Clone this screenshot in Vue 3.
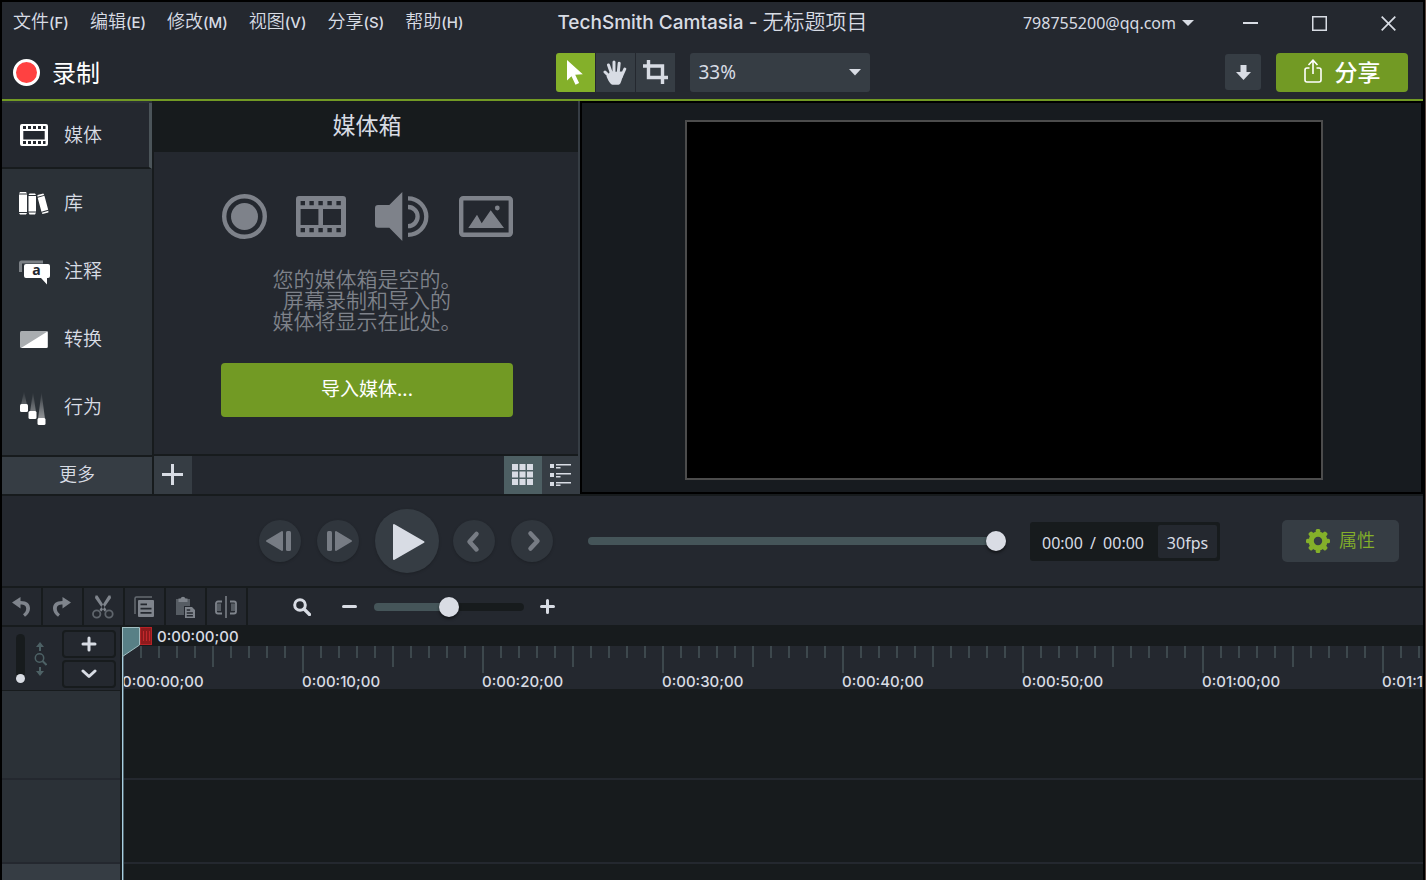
<script setup>
import { ref } from 'vue'

const menus = [
  ['文件', '(F)'],
  ['编辑', '(E)'],
  ['修改', '(M)'],
  ['视图', '(V)'],
  ['分享', '(S)'],
  ['帮助', '(H)'],
]
const tabs = [
  { id: 'media', label: '媒体' },
  { id: 'library', label: '库' },
  { id: 'annotations', label: '注释' },
  { id: 'transitions', label: '转换' },
  { id: 'behaviors', label: '行为' },
]
const active = ref('media')
const position = ref(100)
const timelineZoom = ref(50)
const trackHeight = ref(0)
const marks = [
  '0:00:00;00',
  '0:00:10;00',
  '0:00:20;00',
  '0:00:30;00',
  '0:00:40;00',
  '0:00:50;00',
  '0:01:00;00',
  '0:01:10;00',
]
</script>

<template>
  <div class="app">
    <header class="titlebar">
      <nav class="menus">
        <button v-for="m in menus" :key="m[0]" type="button" class="menu">
          {{ m[0] }}<span class="key">{{ m[1] }}</span>
        </button>
      </nav>
      <h1 class="title">TechSmith Camtasia - <span class="project">无标题项目</span></h1>
      <div class="window">
        <button type="button" class="account">
          798755200@qq.com
          <svg width="12" height="6" viewBox="0 0 12 6"><path d="M0 0h12L6 6z" fill="currentColor" /></svg>
        </button>
        <button type="button" class="win" aria-label="最小化">
          <svg width="15" height="15" viewBox="0 0 15 15"><path d="M0 7h15" stroke="currentColor" stroke-width="2" /></svg>
        </button>
        <button type="button" class="win" aria-label="最大化">
          <svg width="15" height="15" viewBox="0 0 15 15"><rect x="0.75" y="0.75" width="13.5" height="13.5" fill="none" stroke="currentColor" stroke-width="1.5" /></svg>
        </button>
        <button type="button" class="win" aria-label="关闭">
          <svg width="15" height="15" viewBox="0 0 15 15"><path d="M.7.7l13.6 13.6M14.3.7L.7 14.3" stroke="currentColor" stroke-width="1.7" /></svg>
        </button>
      </div>
    </header>

    <div class="toolbar">
      <button type="button" class="record">
        <svg width="27" height="27" viewBox="0 0 27 27"><circle cx="13.5" cy="13.5" r="12" fill="#ff4141" stroke="#fff" stroke-width="3" /></svg>
        录制
      </button>
      <div class="tools">
        <button type="button" class="tool on" aria-label="选择">
          <svg width="18" height="25" viewBox="0 0 18 25"><path d="M1 0v20.500l4.500-4.300 4 8.600 3.600-1.700-3.900-8.300 7.600-.5z" fill="#fff" /></svg>
        </button>
        <button type="button" class="tool" aria-label="平移">
          <svg width="24" height="25" viewBox="0 0 24 25">
            <g stroke="currentColor" stroke-width="3" stroke-linecap="round" fill="none">
              <path d="M2 12l6 6M5.500 5l3.200 9M11 2v11M16.200 3.200L15.200 13M21.800 9l-3.600 8" />
            </g>
            <path d="M7 12l12-.5 1 3.500c-1.500 6-2.500 9.700-4.500 9.700h-6C7.500 24.700 5 20 3.500 16.500z" fill="currentColor" />
          </svg>
        </button>
        <button type="button" class="tool" aria-label="裁剪">
          <svg width="25" height="24" viewBox="0 0 25 24"><path d="M0 6h19.500v18M5.500 0v17.500H25" fill="none" stroke="currentColor" stroke-width="3.400" /></svg>
        </button>
        <div class="scale">
          <select aria-label="画布缩放">
            <option>33%</option>
          </select>
          <svg width="12" height="7" viewBox="0 0 12 7"><path d="M0 0h12L6 6.500z" fill="currentColor" /></svg>
        </div>
      </div>
      <div class="actions">
        <button type="button" class="download" aria-label="下载">
          <svg width="15" height="15" viewBox="0 0 15 15"><path d="M4.500 0h6v7H15l-7.500 8L0 7h4.500z" fill="currentColor" /></svg>
        </button>
        <button type="button" class="share">
          <svg width="18" height="24" viewBox="0 0 18 24"><path d="M5.500 9H3a2 2 0 0 0-2 2v10a2 2 0 0 0 2 2h12a2 2 0 0 0 2-2V11a2 2 0 0 0-2-2h-2.500M9 15V1.500M4.500 6L9 1.200 13.500 6" fill="none" stroke="#fff" stroke-width="1.600" /></svg>
          分享
        </button>
      </div>
    </div>

    <main class="workspace">
      <aside class="sidebar">
        <button
          v-for="t in tabs"
          :key="t.id"
          type="button"
          class="tab"
          :class="{ active: active === t.id }"
          @click="active = t.id"
        >
          <svg v-if="t.id === 'media'" width="32" height="36" viewBox="0 0 32 36">
            <path fill="#fff" fill-rule="evenodd" d="M4 7h24a2 2 0 0 1 2 2v18a2 2 0 0 1-2 2H4a2 2 0 0 1-2-2V9a2 2 0 0 1 2-2zM5.300 14v8.500h21.400V14zM5 9v3h3V9zm5 0v3h3V9zm5 0v3h3V9zm5 0v3h3V9zm5 0v3h2.500V9zM5 24v3h3v-3zm5 0v3h3v-3zm5 0v3h3v-3zm5 0v3h3v-3zm5 0v3h2.500v-3z" />
          </svg>
          <svg v-else-if="t.id === 'library'" width="32" height="36" viewBox="0 0 32 36">
            <g fill="#fff">
              <path d="M1 9.500h8V27H1zM2 7h6l1 1.500H1zM1 28h8l-1 1.500H2zM10.500 11h7.500v15.500h-7.500zM11.500 8.500h5.500l1 1.500h-7.500zM10.500 27.500h7.500l-1 2h-5.500z" />
              <path transform="rotate(-15 25 19)" d="M21.500 11.500h7V26h-7zM22 9h6l.5 1.500h-7zM21.500 27h7l-.5 1.500h-6z" />
            </g>
          </svg>
          <svg v-else-if="t.id === 'annotations'" width="32" height="36" viewBox="0 0 32 36">
            <path d="M2.500 19v-9a1 1 0 0 1 1-1H25" stroke="#7b8085" stroke-width="3" fill="none" />
            <path d="M8 11h22a2 2 0 0 1 2 2V23a2 2 0 0 1-2 2h-1v6.500L23 25H8a2 2 0 0 1-2-2V13a2 2 0 0 1 2-2z" fill="#fff" />
            <text x="18.500" y="22" text-anchor="middle" class="glyph">a</text>
          </svg>
          <svg v-else-if="t.id === 'transitions'" width="32" height="36" viewBox="0 0 32 36">
            <rect x="2" y="10" width="28" height="17" rx="1.500" fill="#a9adb0" />
            <path d="M29.500 10.500V25.500a1.500 1.500 0 0 1-1.500 1.500H3z" fill="#fff" />
          </svg>
          <svg v-else width="32" height="36" viewBox="0 0 32 36">
            <defs>
              <linearGradient id="trail" x1="0" y1="0" x2="0" y2="1">
                <stop offset="0" stop-color="#fff" stop-opacity="0" />
                <stop offset="1" stop-color="#fff" stop-opacity="0.500" />
              </linearGradient>
            </defs>
            <path d="M6 2l3 14H3zM15 3l3 20h-6zM23.500 3l3.500 27h-7z" fill="url(#trail)" />
            <g fill="#fff"><rect x="2" y="15" width="8" height="8" rx="1.500" /><rect x="10.500" y="22" width="8" height="8" rx="1.500" /><rect x="19.500" y="29" width="8" height="7" rx="1.500" /></g>
          </svg>
          <span>{{ t.label }}</span>
        </button>
        <button type="button" class="more">更多</button>
      </aside>

      <section class="bin">
        <h2 class="bin-title">媒体箱</h2>
        <div class="bin-body">
          <div class="kinds">
            <svg width="45" height="45" viewBox="0 0 45 45"><circle cx="22.500" cy="22.500" r="20.300" fill="none" stroke="currentColor" stroke-width="4.400" /><circle cx="22.500" cy="22.500" r="13.500" fill="currentColor" /></svg>
            <svg width="50" height="41" viewBox="0 0 50 41">
              <path fill="currentColor" fill-rule="evenodd" d="M3 0h44a3 3 0 0 1 3 3v35a3 3 0 0 1-3 3H3a3 3 0 0 1-3-3V3a3 3 0 0 1 3-3zM4.600 13v16h17.800V13zM27 13v16h18V13zM4.600 5v4.300H9V5zm8.800 0v4.300h4.400V5zm9 0v4.300h4.400V5zm9 0v4.300h4.400V5zm9 0v4.300h4.400V5zM4.600 32v4.300H9V32zm8.800 0v4.300h4.400V32zm9 0v4.300h4.400V32zm9 0v4.300h4.400V32zm9 0v4.300h4.400V32z" />
            </svg>
            <svg width="55" height="49" viewBox="0 0 55 49">
              <path d="M3 13h11.300L27.300 0v49L14.300 35.700H3a3 3 0 0 1-3-3V16a3 3 0 0 1 3-3z" fill="currentColor" />
              <path d="M33 6.300a18.300 18.300 0 0 1 0 36.600M33 15a9.600 9.600 0 0 1 0 19.200" fill="none" stroke="currentColor" stroke-width="4.300" />
            </svg>
            <svg width="54" height="41" viewBox="0 0 54 41">
              <rect x="2.200" y="2.200" width="49.600" height="36.600" rx="2" fill="none" stroke="currentColor" stroke-width="4.400" />
              <path d="M9.300 32L18 18.700l4.700 8.600 9-13L45 32z" fill="currentColor" /><circle cx="38.300" cy="12" r="2.400" fill="currentColor" />
            </svg>
          </div>
          <p class="empty">您的媒体箱是空的。<br />屏幕录制和导入的<br />媒体将显示在此处。</p>
          <button type="button" class="import">导入媒体...</button>
        </div>
        <div class="bin-bar">
          <button type="button" class="sq" aria-label="添加">
            <svg width="21" height="21" viewBox="0 0 21 21"><path d="M10.500 0v21M0 10.500h21" stroke="currentColor" stroke-width="3" /></svg>
          </button>
          <span class="grow"></span>
          <button type="button" class="sq on" aria-label="缩略图">
            <svg width="21" height="21" viewBox="0 0 21 21"><path d="M0 0h6v6H0zM7.500 0h6v6h-6zM15 0h6v6h-6zM0 7.500h6v6H0zM7.500 7.500h6v6h-6zM15 7.500h6v6h-6zM0 15h6v6H0zM7.500 15h6v6h-6zM15 15h6v6h-6z" fill="currentColor" /></svg>
          </button>
          <button type="button" class="sq" aria-label="列表">
            <svg width="21" height="22" viewBox="0 0 21 22"><path d="M0 0h4v4H0zM0 9h4v4H0zM0 18h4v4H0zM6 0h15v1.500H6zM6 9h15v1.500H6zM6 18h15v1.500H6zM6 3h4.500v1.500H6zM6 12h4.500v1.500H6zM6 20.500h4.500V22H6z" fill="currentColor" /></svg>
          </button>
        </div>
      </section>

      <section class="preview"><div class="canvas"></div></section>
    </main>

    <section class="player">
      <div class="transport">
        <button type="button" class="round" aria-label="上一帧">
          <svg width="42" height="42" viewBox="0 0 42 42"><path d="M8 21l15-9v18z" fill="currentColor" stroke="currentColor" stroke-width="2" stroke-linejoin="round" /><rect x="27" y="11" width="5" height="20" rx="1.500" fill="currentColor" /></svg>
        </button>
        <button type="button" class="round" aria-label="下一帧">
          <svg width="42" height="42" viewBox="0 0 42 42"><path d="M34 21l-15-9v18z" fill="currentColor" stroke="currentColor" stroke-width="2" stroke-linejoin="round" /><rect x="10" y="11" width="5" height="20" rx="1.500" fill="currentColor" /></svg>
        </button>
        <button type="button" class="round play" aria-label="播放">
          <svg width="64" height="64" viewBox="0 0 64 64"><path d="M19 16v34l29.500-17z" fill="currentColor" stroke="currentColor" stroke-width="2" stroke-linejoin="round" /></svg>
        </button>
        <button type="button" class="round" aria-label="上一个标记">
          <svg width="42" height="42" viewBox="0 0 42 42"><path d="M23.500 14l-7 7.700 7 7.700" fill="none" stroke="currentColor" stroke-width="4.500" stroke-linecap="round" stroke-linejoin="round" /></svg>
        </button>
        <button type="button" class="round" aria-label="下一个标记">
          <svg width="42" height="42" viewBox="0 0 42 42"><path d="M19.500 13.500l7 7.500-7 7.500" fill="none" stroke="currentColor" stroke-width="4.500" stroke-linecap="round" stroke-linejoin="round" /></svg>
        </button>
      </div>
      <input v-model="position" class="slider seek" type="range" min="0" max="100" aria-label="播放位置" :style="{ '--fill': position + '%' }" />
      <div class="time">
        <span class="clock"><span>00:00</span><span>/</span><span>00:00</span></span>
        <span class="fps">30fps</span>
      </div>
      <button type="button" class="props">
        <svg width="24" height="24" viewBox="0 0 24 24">
          <g fill="currentColor">
            <rect x="9.700" y="0" width="4.600" height="24" rx="1.500" />
            <rect x="9.700" y="0" width="4.600" height="24" rx="1.500" transform="rotate(45 12 12)" />
            <rect x="9.700" y="0" width="4.600" height="24" rx="1.500" transform="rotate(90 12 12)" />
            <rect x="9.700" y="0" width="4.600" height="24" rx="1.500" transform="rotate(135 12 12)" />
            <circle cx="12" cy="12" r="9.500" />
          </g>
          <circle cx="12" cy="12" r="4.200" fill="#363d44" />
        </svg>
        <span>属性</span>
      </button>
    </section>

    <div class="editbar">
      <button type="button" class="edit" aria-label="撤消">
        <svg width="24" height="24" viewBox="0 0 24 24"><path d="M3 7.500L11.500 2v4c7 0 9.500 3 9.500 7.500 0 3-2 6-5 8.200l-2-2.500c2-1.500 3.200-3.500 3.200-5.500 0-3-2-4.200-5.700-4.200v4z" fill="currentColor" /></svg>
      </button>
      <button type="button" class="edit" aria-label="重做">
        <svg width="24" height="24" viewBox="0 0 24 24"><path d="M21 7.500L12.500 2v4C5.500 6 3 9 3 13.500c0 3 2 6 5 8.200l2-2.500c-2-1.500-3.200-3.500-3.200-5.500 0-3 2-4.200 5.700-4.200v4z" fill="currentColor" /></svg>
      </button>
      <button type="button" class="edit" aria-label="剪切">
        <svg width="24" height="24" viewBox="0 0 24 24">
          <path d="M4.500.5L6.500.5 15.500 15l-2 1.500L4 3zM19.500.5h-2L8.500 15l2 1.500L20 3z" fill="currentColor" />
          <circle cx="5.700" cy="19" r="3.700" fill="none" stroke="#5f656c" stroke-width="1.800" /><circle cx="18" cy="19" r="3.700" fill="none" stroke="#5f656c" stroke-width="1.800" />
        </svg>
      </button>
      <button type="button" class="edit" aria-label="复制">
        <svg width="24" height="24" viewBox="0 0 24 24">
          <path d="M3 19V3.500A1.500 1.500 0 0 1 4.500 2H20" fill="none" stroke="#656b72" stroke-width="1.500" />
          <path fill="currentColor" fill-rule="evenodd" d="M7 5h14a1 1 0 0 1 1 1v15a1 1 0 0 1-1 1H7a1 1 0 0 1-1-1V6a1 1 0 0 1 1-1zm1.500 3.500v1.800H15V8.500zm0 4.300v1.800h11v-1.800zm0 4.200v1.800h11V17z" />
        </svg>
      </button>
      <button type="button" class="edit" aria-label="粘贴">
        <svg width="24" height="24" viewBox="0 0 24 24">
          <path d="M3 4h14v7h-6v9H3z" fill="#565c63" />
          <path d="M5.500 3.500h2a2.700 2.700 0 0 1 5 0h2V7h-9z" fill="currentColor" />
          <path fill="currentColor" fill-rule="evenodd" d="M12 12h7l3 3v8H12zm1.700 2.300v1.500h3.500v-1.500zm0 3v1.500h6.200v-1.500zm0 2.800v1.500h6.200v-1.500z" />
        </svg>
      </button>
      <button type="button" class="edit" aria-label="拆分">
        <svg width="24" height="24" viewBox="0 0 24 24">
          <path d="M12 1v22" stroke="currentColor" stroke-width="1.500" /><path d="M3 8.500h4v7.500H3zM17 8.500h4v7.500h-4z" fill="#565c63" />
          <path d="M8 6.500H4A2 2 0 0 0 2 8.500v8a2 2 0 0 0 2 2h4M16 6.500h4a2 2 0 0 1 2 2v8a2 2 0 0 1-2 2h-4" fill="none" stroke="currentColor" stroke-width="1.800" />
        </svg>
      </button>
      <svg class="lens" width="18" height="18" viewBox="0 0 18 18"><circle cx="7" cy="7" r="5.300" fill="none" stroke="currentColor" stroke-width="3" /><path d="M11 11l5.500 5.500" stroke="currentColor" stroke-width="3.200" stroke-linecap="round" /></svg>
      <button type="button" class="step" aria-label="缩小">
        <svg width="15" height="15" viewBox="0 0 15 15"><path d="M1.500 7.500h12" stroke="currentColor" stroke-width="3" stroke-linecap="round" /></svg>
      </button>
      <input v-model="timelineZoom" class="slider zoom" type="range" min="0" max="100" aria-label="时间轴缩放" :style="{ '--fill': timelineZoom + '%' }" />
      <button type="button" class="step" aria-label="放大">
        <svg width="15" height="15" viewBox="0 0 15 15"><path d="M1.500 7.500h12M7.500 1.500v12" stroke="currentColor" stroke-width="3" stroke-linecap="round" /></svg>
      </button>
    </div>

    <section class="timeline">
      <div class="heads">
        <div class="head-tools">
          <input v-model="trackHeight" class="height" type="range" min="0" max="100" aria-label="轨道高度" />
          <svg width="13" height="36" viewBox="0 0 13 36">
            <path d="M6 1l4 5H7v4H5V6H2zM6 35l4-5H7v-4H5v4H2z" fill="#4d6165" />
            <circle cx="5.500" cy="17" r="4.200" fill="none" stroke="#4d6165" stroke-width="1.500" /><path d="M8.500 20l4 4" stroke="#4d6165" stroke-width="2" />
          </svg>
          <div class="head-buttons">
            <button type="button" aria-label="添加轨道">
              <svg width="16" height="16" viewBox="0 0 16 16"><path d="M2 8h12M8 2v12" stroke="currentColor" stroke-width="3" stroke-linecap="round" /></svg>
            </button>
            <button type="button" aria-label="轨道选项">
              <svg width="16" height="10" viewBox="0 0 16 10"><path d="M2 2l6 5.500L14 2" fill="none" stroke="currentColor" stroke-width="3" stroke-linecap="round" stroke-linejoin="round" /></svg>
            </button>
          </div>
        </div>
        <div class="head first"></div>
        <div class="head second"></div>
        <div class="head rest"></div>
      </div>
      <div class="lanes">
        <div class="current">0:00:00;00</div>
        <div class="ruler">
          <div v-for="m in marks" :key="m" class="mark">
            <div class="ticks"><i v-for="n in 10" :key="n"></i></div>
            <span>{{ m }}</span>
          </div>
        </div>
        <div class="lane first"></div>
        <div class="lane second"></div>
        <div class="lane rest"></div>
        <div class="playhead">
          <svg width="30" height="30" viewBox="0 0 30 30">
            <path d="M.5.500h17V18L.5 29.500z" fill="#588086" stroke="#a3bfc3" />
            <rect x="18.500" y=".5" width="11" height="17" fill="#8e1a1c" stroke="#b52327" />
            <path d="M21.500 4v10M24.500 4v10M27.500 4v10" stroke="#c4282c" />
          </svg>
        </div>
      </div>
    </section>
  </div>
</template>

<style>
html,
body {
  background: #000;
}
body {
  margin: 0;
  overflow: hidden;
}
</style>

<style scoped>
* {
  box-sizing: border-box;
}
.app {
  --bg: #24282f;
  --dark: #171b1d;
  --panel: #2b3137;
  --raised: #363d44;
  --teal: #455559;
  --text: #d8dce4;
  --green: #729a24;
  --lime: #84b02a;
  --cjk: 'Noto Sans CJK SC', sans-serif;
  display: flex;
  flex-direction: column;
  height: 100vh;
  padding: 2px 2px 0;
  border-right: 1px solid #5a4841;
  background: #000;
  color: var(--text);
  font-family: 'Noto Sans', 'Noto Sans CJK SC', sans-serif;
  font-size: 16px;
}
button,
select,
input {
  margin: 0;
  padding: 0;
  border: 0;
  font: inherit;
  color: inherit;
  background: none;
}
svg {
  display: block;
  flex: none;
}
h1,
h2,
p {
  margin: 0;
  font-weight: 400;
}

.titlebar {
  display: grid;
  grid-template-columns: 1fr auto 1fr;
  align-items: center;
  height: 43px;
  background: var(--bg);
}
.menus {
  display: flex;
  gap: 21px;
  padding: 0 0 4px 11px;
  white-space: nowrap;
}
.menu {
  font-family: var(--cjk);
  font-size: 18px;
  font-weight: 350;
  line-height: 24px;
}
.key {
  font-family: Inter, sans-serif;
  font-size: 15px;
  font-weight: 500;
}
.title {
  padding-bottom: 4px;
  font-family: Inter, 'Noto Sans CJK SC', sans-serif;
  font-size: 19px;
  font-weight: 500;
  line-height: 30px;
  white-space: nowrap;
}
.project {
  font-family: var(--cjk);
  font-size: 21px;
  font-weight: 350;
}
.window {
  display: flex;
  justify-content: flex-end;
  align-self: stretch;
}
.account {
  display: flex;
  align-items: center;
  gap: 6px;
  padding: 0 22px 2px 0;
}
.win {
  display: grid;
  place-items: center;
  width: 69px;
}

.toolbar {
  display: grid;
  grid-template-columns: 1fr auto 1fr;
  align-items: center;
  height: 56px;
  border-bottom: 2px solid var(--green);
  background: var(--bg);
}
.record {
  display: flex;
  align-items: center;
  justify-self: start;
  gap: 12px;
  padding-left: 11px;
  font-family: var(--cjk);
  font-size: 24px;
  line-height: 36px;
  color: #fff;
}
.tools {
  display: flex;
  gap: 1px;
}
.tool {
  display: grid;
  place-items: center;
  width: 39px;
  height: 39px;
  background: var(--raised);
}
.tool.on {
  border-radius: 3px 0 0 3px;
  background: var(--lime);
}
.scale {
  display: grid;
  align-items: center;
  width: 180px;
  margin-left: 14px;
  border-radius: 3px;
  background: var(--raised);
}
.scale select,
.scale svg {
  grid-area: 1 / 1;
}
.scale select {
  appearance: none;
  height: 39px;
  padding-left: 9px;
  font-size: 19px;
}
.scale svg {
  justify-self: end;
  margin-right: 9px;
  pointer-events: none;
}
.actions {
  display: flex;
  justify-content: flex-end;
  align-items: center;
  gap: 15px;
  padding-right: 15px;
}
.download {
  display: grid;
  place-items: center;
  width: 36px;
  height: 36px;
  border-radius: 3px;
  background: var(--raised);
}
.share {
  display: flex;
  align-items: center;
  justify-content: center;
  gap: 13px;
  width: 132px;
  height: 39px;
  padding-bottom: 2px;
  border-radius: 4px;
  background: var(--green);
  color: #fff;
  font-family: var(--cjk);
  font-size: 23px;
  font-weight: 500;
}

.workspace {
  display: grid;
  grid-template-columns: 150px 426px 1fr;
  column-gap: 2px;
  background: var(--dark);
  border-bottom: 2px solid var(--dark);
}
.sidebar {
  display: flex;
  flex-direction: column;
  padding-top: 2px;
  background: var(--panel);
}
.tab {
  display: flex;
  align-items: center;
  gap: 14px;
  height: 68px;
  padding-left: 16px;
  font-family: var(--cjk);
  font-size: 19px;
  font-weight: 350;
  line-height: 28px;
}
.tab span {
  padding-bottom: 2px;
}
.tab.active {
  height: 66px;
  border-right: 3px solid #4b5459;
  border-bottom: 2px solid var(--dark);
  background: var(--bg);
}
.glyph {
  font: bold 14px 'Noto Sans', sans-serif;
  fill: #24282f;
}
.more {
  height: 39px;
  margin-top: auto;
  padding-bottom: 5px;
  border-top: 2px solid var(--dark);
  background: var(--raised);
  font-family: var(--cjk);
  font-size: 18px;
  font-weight: 350;
}
.bin {
  display: flex;
  flex-direction: column;
  border-right: 2px solid var(--raised);
}
.bin-title {
  height: 51px;
  padding-left: 2px;
  font-family: var(--cjk);
  font-size: 23px;
  line-height: 46px;
  text-align: center;
}
.bin-body {
  display: flex;
  flex-direction: column;
  align-items: center;
  padding: 40px 0 37px 2px;
  border-bottom: 2px solid var(--dark);
  background: var(--bg);
  color: #7e828a;
}
.kinds {
  display: flex;
  align-items: center;
  gap: 29px;
  height: 49px;
}
.empty {
  margin-top: 27px;
  font-family: var(--cjk);
  font-size: 21px;
  font-weight: 350;
  line-height: 21px;
  text-align: center;
}
.import {
  width: 292px;
  height: 54px;
  margin-top: 32px;
  padding-bottom: 6px;
  border-radius: 4px;
  background: var(--green);
  color: #fff;
  font-family: var(--cjk);
  font-size: 19px;
}
.bin-bar {
  display: flex;
  height: 38px;
  margin-right: -2px;
  background: var(--bg);
}
.grow {
  flex: 1;
}
.sq {
  display: grid;
  place-items: center;
  width: 38px;
  padding: 0 1px 1px 0;
  background: var(--raised);
}
.sq.on {
  background: #4d5f63;
}
.preview {
  display: flex;
  justify-content: center;
  margin-left: -2px;
  padding: 17px 0 12px 5px;
  border: 2px solid #000;
  background: #171b1f;
}
.canvas {
  aspect-ratio: 638 / 360;
  border: 2px solid #4c4c4c;
  background: #000;
}

.player {
  display: flex;
  align-items: center;
  height: 92px;
  padding: 0 24px 0 257px;
  border-bottom: 2px solid var(--dark);
  background: var(--bg);
}
.transport {
  display: flex;
  align-items: center;
  gap: 16px;
}
.round {
  border-radius: 50%;
  background: #30363d;
  color: #777c84;
  box-shadow: 0 1px 3px rgb(0 0 0 / 20%);
}
.play {
  background: var(--raised);
  color: var(--text);
}
.round.play + .round {
  margin-left: -2px;
}
.slider {
  appearance: none;
  height: 20px;
}
.slider::-webkit-slider-runnable-track {
  height: 8px;
  border-radius: 4px;
  background: linear-gradient(to right, var(--teal) var(--fill), var(--dark) var(--fill));
}
.slider::-webkit-slider-thumb {
  appearance: none;
  width: 20px;
  height: 20px;
  margin-top: -6px;
  border-radius: 50%;
  background: #d9dce4;
  box-shadow: 0 2px 3px rgb(0 0 0 / 50%);
}
.seek {
  flex: 1;
  min-width: 0;
  margin: 0 24px 0 35px;
}
.time {
  display: flex;
  height: 39px;
  padding: 3px;
  border-radius: 3px;
  background: var(--dark);
  line-height: 36px;
  white-space: nowrap;
}
.clock {
  display: flex;
  justify-content: space-between;
  width: 102px;
  margin: 0 14px 0 9px;
}
.fps {
  width: 59px;
  border-radius: 2px;
  background: var(--bg);
  text-align: center;
}
.props {
  display: flex;
  align-items: center;
  justify-content: center;
  gap: 9px;
  width: 117px;
  height: 42px;
  margin-left: 62px;
  border-radius: 5px;
  background: var(--raised);
  color: var(--lime);
  font-family: var(--cjk);
  font-size: 18px;
  font-weight: 350;
}
.props span {
  padding-bottom: 5px;
}

.editbar {
  display: flex;
  align-items: center;
  height: 39px;
  border-bottom: 2px solid var(--dark);
  background: var(--bg);
}
.edit {
  display: grid;
  place-items: center;
  align-self: stretch;
  width: 41px;
  padding-right: 1px;
  border-right: 2px solid var(--dark);
  color: #7f848c;
}
.lens {
  margin: 0 28px 0 45px;
}
.step {
  padding: 3px;
}
.zoom {
  width: 150px;
  margin: 0 13px 0 14px;
}

.timeline {
  display: flex;
  flex: 1;
  min-height: 0;
  overflow: hidden;
  background: var(--dark);
}
.heads {
  display: flex;
  flex-direction: column;
  width: 118px;
  margin-right: 2px;
}
.head-tools {
  display: flex;
  align-items: center;
  height: 64px;
  padding-left: 14px;
  border-bottom: 1px solid var(--dark);
  background: var(--bg);
}
.height {
  appearance: none;
  writing-mode: vertical-lr;
  direction: rtl;
  width: 9px;
  height: 49px;
  margin-right: 9px;
}
.height::-webkit-slider-runnable-track {
  width: 9px;
  border-radius: 5px;
  background: var(--dark);
}
.height::-webkit-slider-thumb {
  appearance: none;
  width: 9px;
  height: 9px;
  border-radius: 50%;
  background: #d9dce4;
}
.head-buttons {
  display: grid;
  gap: 2px;
  margin-left: 15px;
}
.head-buttons button {
  display: grid;
  place-items: center;
  width: 54px;
  height: 28px;
  border: 2px solid var(--dark);
  border-radius: 4px;
}
.head {
  background: var(--panel);
  border-bottom: 2px solid var(--bg);
}
.head.first {
  height: 89px;
}
.lane.first {
  height: 91px;
}
.second {
  height: 84px;
}
.rest {
  flex: 1;
}
.head.rest {
  border: 0;
  background: var(--raised);
}
.lanes {
  position: relative;
  display: flex;
  flex: 1;
  flex-direction: column;
  min-width: 0;
  overflow: hidden;
  font-family: Inter, sans-serif;
  font-size: 15px;
  font-weight: 500;
}
.current {
  height: 19px;
  padding-left: 35px;
  line-height: 19px;
}
.ruler {
  display: flex;
  height: 43px;
  background: var(--bg);
}
.mark {
  flex: none;
  width: 180px;
}
.ticks {
  display: flex;
  height: 27px;
}
.ticks i {
  width: 18px;
  height: 12px;
  border-left: 2px solid #3d484d;
}
.ticks i:nth-child(1) {
  height: 27px;
}
.ticks i:nth-child(6) {
  height: 21px;
}
.mark span {
  display: block;
  line-height: 18px;
}
.lane {
  border-bottom: 2px solid var(--bg);
}
.lane.rest {
  border: 0;
}
.playhead {
  position: absolute;
  top: 0;
  bottom: 0;
  left: 0;
  border-left: 1px solid #a9cfe0;
  box-shadow: inset 1px 0 #51666f;
}
.playhead svg {
  margin-left: -1px;
}
</style>
